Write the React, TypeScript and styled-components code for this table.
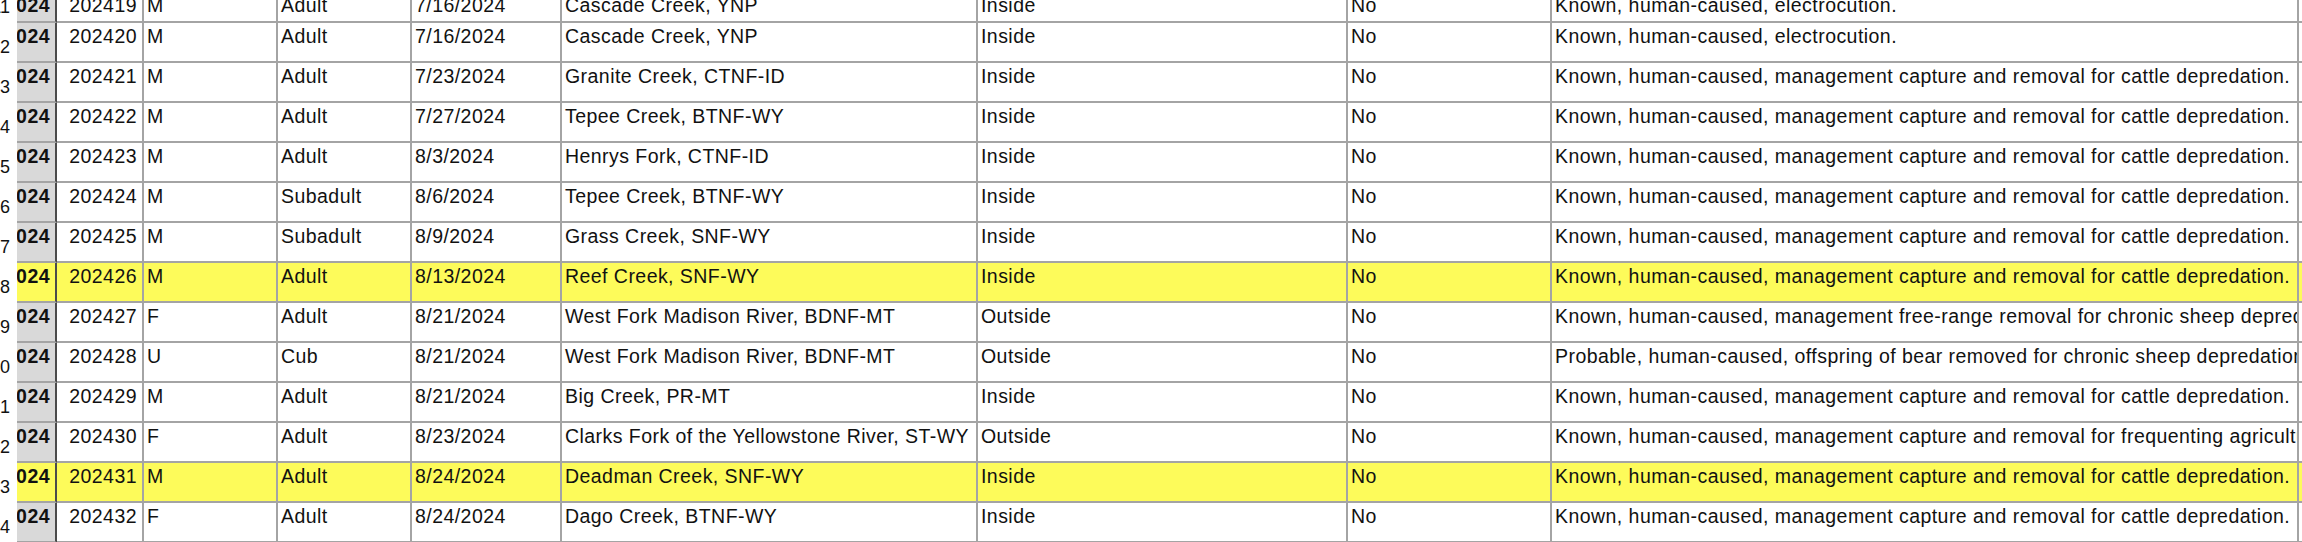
import React from 'react';
import styled, { createGlobalStyle } from 'styled-components';

interface Mortality {
  rowNum: number;
  year: string;
  id: string;
  sex: string;
  age: string;
  date: string;
  location: string;
  area: string;
  confirmed: string;
  cause: string;
  highlight?: boolean;
}

const CATTLE = 'Known, human-caused, management capture and removal for cattle depredation.';

const rows: Mortality[] = [
  { rowNum: 11, year: '2024', id: '202419', sex: 'M', age: 'Adult', date: '7/16/2024', location: 'Cascade Creek, YNP', area: 'Inside', confirmed: 'No', cause: 'Known, human-caused, electrocution.' },
  { rowNum: 12, year: '2024', id: '202420', sex: 'M', age: 'Adult', date: '7/16/2024', location: 'Cascade Creek, YNP', area: 'Inside', confirmed: 'No', cause: 'Known, human-caused, electrocution.' },
  { rowNum: 13, year: '2024', id: '202421', sex: 'M', age: 'Adult', date: '7/23/2024', location: 'Granite Creek, CTNF-ID', area: 'Inside', confirmed: 'No', cause: CATTLE },
  { rowNum: 14, year: '2024', id: '202422', sex: 'M', age: 'Adult', date: '7/27/2024', location: 'Tepee Creek, BTNF-WY', area: 'Inside', confirmed: 'No', cause: CATTLE },
  { rowNum: 15, year: '2024', id: '202423', sex: 'M', age: 'Adult', date: '8/3/2024', location: 'Henrys Fork, CTNF-ID', area: 'Inside', confirmed: 'No', cause: CATTLE },
  { rowNum: 16, year: '2024', id: '202424', sex: 'M', age: 'Subadult', date: '8/6/2024', location: 'Tepee Creek, BTNF-WY', area: 'Inside', confirmed: 'No', cause: CATTLE },
  { rowNum: 17, year: '2024', id: '202425', sex: 'M', age: 'Subadult', date: '8/9/2024', location: 'Grass Creek, SNF-WY', area: 'Inside', confirmed: 'No', cause: CATTLE },
  { rowNum: 18, year: '2024', id: '202426', sex: 'M', age: 'Adult', date: '8/13/2024', location: 'Reef Creek, SNF-WY', area: 'Inside', confirmed: 'No', cause: CATTLE, highlight: true },
  { rowNum: 19, year: '2024', id: '202427', sex: 'F', age: 'Adult', date: '8/21/2024', location: 'West Fork Madison River, BDNF-MT', area: 'Outside', confirmed: 'No', cause: 'Known, human-caused, management free-range removal for chronic sheep depredation.' },
  { rowNum: 20, year: '2024', id: '202428', sex: 'U', age: 'Cub', date: '8/21/2024', location: 'West Fork Madison River, BDNF-MT', area: 'Outside', confirmed: 'No', cause: 'Probable, human-caused, offspring of bear removed for chronic sheep depredation.' },
  { rowNum: 21, year: '2024', id: '202429', sex: 'M', age: 'Adult', date: '8/21/2024', location: 'Big Creek, PR-MT', area: 'Inside', confirmed: 'No', cause: CATTLE },
  { rowNum: 22, year: '2024', id: '202430', sex: 'F', age: 'Adult', date: '8/23/2024', location: 'Clarks Fork of the Yellowstone River, ST-WY', area: 'Outside', confirmed: 'No', cause: 'Known, human-caused, management capture and removal for frequenting agricultural areas.' },
  { rowNum: 23, year: '2024', id: '202431', sex: 'M', age: 'Adult', date: '8/24/2024', location: 'Deadman Creek, SNF-WY', area: 'Inside', confirmed: 'No', cause: CATTLE, highlight: true },
  { rowNum: 24, year: '2024', id: '202432', sex: 'F', age: 'Adult', date: '8/24/2024', location: 'Dago Creek, BTNF-WY', area: 'Inside', confirmed: 'No', cause: CATTLE },
];

const App: React.FC = () => {
  return (
    <>
      <GlobalStyle />
      <Sheet>
        {rows.map((row, i) => (
          <Row key={row.id} $highlight={row.highlight} $first={i === 0}>
            <RowNum>{row.rowNum}</RowNum>
            <YearCell $highlight={row.highlight}>{row.year}</YearCell>
            <Cell $numeric>{row.id}</Cell>
            <Cell>{row.sex}</Cell>
            <Cell>{row.age}</Cell>
            <Cell>{row.date}</Cell>
            <Cell>{row.location}</Cell>
            <Cell>{row.area}</Cell>
            <Cell>{row.confirmed}</Cell>
            <Cell>{row.cause}</Cell>
            <Cell />
          </Row>
        ))}
      </Sheet>
    </>
  );
};

export default App;

const GlobalStyle = createGlobalStyle`
  html, body {
    margin: 0;
    padding: 0;
    background: #ffffff;
    overflow: hidden;
  }
  body {
    font-family: "Liberation Sans", Arial, Helvetica, sans-serif;
    color: #111111;
  }
`;

const Sheet = styled.div`
  width: 2302px;
  height: 542px;
  overflow: hidden;
  display: flex;
  flex-direction: column;
`;

const Row = styled.div<{ $highlight?: boolean; $first?: boolean }>`
  display: grid;
  grid-template-columns: 17px 40px 87px 134px 134px 150px 416px 370px 204px 747px 1fr;
  flex: none;
  height: ${p => (p.$first ? '31px' : '40px')};
  margin-top: ${p => (p.$first ? '-8px' : '0')};
  background: ${p => (p.$highlight ? '#fdfb5a' : '#ffffff')};
  font-size: 19.5px;
  letter-spacing: 0.45px;
  line-height: 22px;
`;

const RowNum = styled.div`
  display: flex;
  justify-content: flex-end;
  align-items: flex-end;
  padding: 0 7px 5px 0;
  overflow: hidden;
  background: #ffffff;
  font-size: 18px;
  letter-spacing: 0;
  white-space: nowrap;
`;

const YearCell = styled.div<{ $highlight?: boolean }>`
  display: flex;
  justify-content: flex-end;
  align-items: flex-start;
  padding: 2px 5px 0 0;
  overflow: hidden;
  white-space: nowrap;
  font-weight: bold;
  background: ${p => (p.$highlight ? '#fdfb5a' : '#d9d9d9')};
  border-right: 2px solid #4b4b4b;
  border-bottom: 2px solid #a4a4a4;
`;

const Cell = styled.div<{ $numeric?: boolean }>`
  display: flex;
  justify-content: ${p => (p.$numeric ? 'flex-end' : 'flex-start')};
  align-items: flex-start;
  padding: 2px ${p => (p.$numeric ? '5px' : '3px')} 0 3px;
  overflow: hidden;
  white-space: nowrap;
  border-right: 2px solid #a4a4a4;
  border-bottom: 2px solid #a4a4a4;
`;
